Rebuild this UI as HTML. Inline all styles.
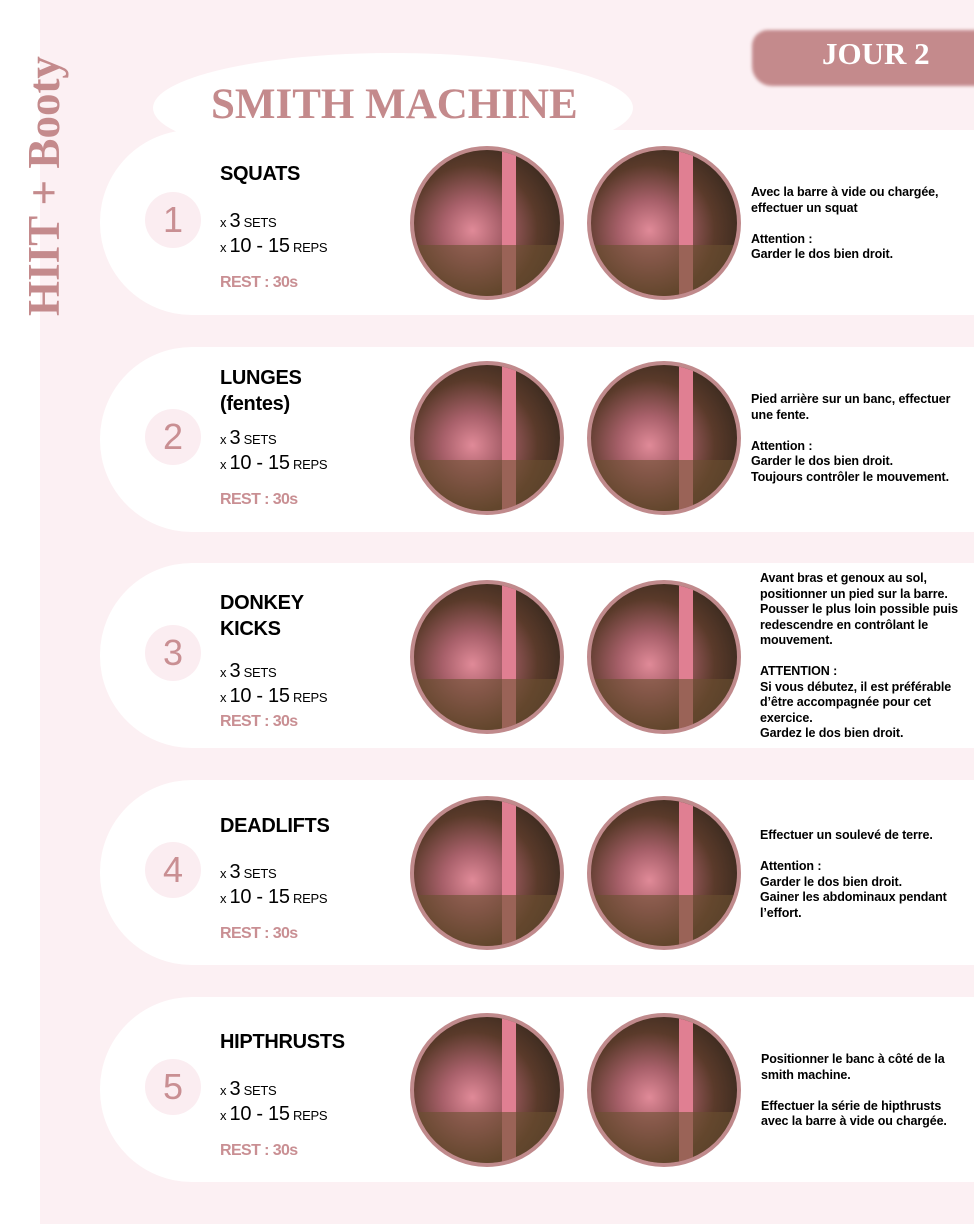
<!DOCTYPE html>
<html><head><meta charset="utf-8"><style>
*{margin:0;padding:0;box-sizing:border-box}
body{width:974px;height:1224px;position:relative;overflow:hidden;background:#fff;font-family:"Liberation Sans",sans-serif}
.bg{position:absolute;left:40px;top:0;width:934px;height:1224px;background:#fcf0f3}
.vt{position:absolute;left:44px;top:186px;transform:translate(-50%,-50%) rotate(-90deg);font-family:"Liberation Serif",serif;font-weight:bold;font-size:45px;color:#c48a8c;white-space:nowrap}
.ell{position:absolute;left:153px;top:53px;width:480px;height:110px;border-radius:50%;background:#fff}
.title{position:absolute;left:211px;top:80px;width:365px;text-align:center;font-family:"Liberation Serif",serif;font-weight:bold;font-size:43px;color:#c48a8c;white-space:nowrap}
.jour{position:absolute;left:752px;top:30px;width:240px;height:56px;background:#c48a8c;border-radius:16px 0 0 20px;filter:blur(1.5px)}
.jt{position:absolute;left:822px;top:36px;font-family:"Liberation Serif",serif;font-weight:bold;font-size:31px;color:#fff}
.card{position:absolute;left:100px;width:874px;height:185px;background:#fff;border-radius:92px 0 0 92px}
.num{position:absolute;left:45px;top:62px;width:56px;height:56px;border-radius:50%;background:#fbedf1;color:#c98f93;font-size:36px;text-align:center;line-height:56px}
.ex{position:absolute;left:120px;font-weight:bold;font-size:20px;color:#000;line-height:26px;letter-spacing:-0.3px}
.s{position:absolute;left:120px;font-size:13px;color:#000;letter-spacing:-0.3px}
.s b{font-weight:normal;font-size:20px}
.r{position:absolute;left:120px;font-size:16px;font-weight:bold;color:#c98f93;letter-spacing:-0.6px}
.ph{position:absolute;width:154px;height:154px;border-radius:50%;border:4px solid #c08a8c;background:radial-gradient(circle at 40% 55%,#e08a98 0,#a8606a 25%,#5a3a2a 55%,#3a2a1f 80%);overflow:hidden}
.ph::before{content:"";position:absolute;left:60%;top:0;width:14px;height:100%;background:#e07f92}
.ph::after{content:"";position:absolute;left:0;bottom:0;width:100%;height:35%;background:#6a5030;opacity:.6}
.d{position:absolute;font-size:12.5px;font-weight:bold;line-height:15.5px;letter-spacing:-0.1px;color:#000}
</style></head><body>
<div class="bg"></div>
<div class="vt">HIIT + Booty</div>
<div class="jour"></div><div class="jt">JOUR 2</div>
<div class="ell"></div><div class="title">SMITH MACHINE</div>

<div class="card" style="top:130px">
<div class="num">1</div>
<div class="ex" style="top:31px">SQUATS</div>
<div class="s" style="top:80px">x <b>3</b> SETS</div>
<div class="s" style="top:105px">x <b>10 - 15</b> REPS</div>
<div class="r" style="top:144px">REST : 30s</div>
<div class="ph" style="left:310px;top:16px"></div>
<div class="ph" style="left:487px;top:16px"></div>
<div class="d" style="left:651px;top:55px">Avec la barre à vide ou chargée,<br>effectuer un squat<br><br>Attention :<br>Garder le dos bien droit.</div>
</div>

<div class="card" style="top:347px">
<div class="num">2</div>
<div class="ex" style="top:18px">LUNGES<br>(fentes)</div>
<div class="s" style="top:80px">x <b>3</b> SETS</div>
<div class="s" style="top:105px">x <b>10 - 15</b> REPS</div>
<div class="r" style="top:144px">REST : 30s</div>
<div class="ph" style="left:310px;top:14px"></div>
<div class="ph" style="left:487px;top:14px"></div>
<div class="d" style="left:651px;top:45px">Pied arrière sur un banc, effectuer<br>une fente.<br><br>Attention :<br>Garder le dos bien droit.<br>Toujours contrôler le mouvement.</div>
</div>

<div class="card" style="top:563px">
<div class="num">3</div>
<div class="ex" style="top:27px">DONKEY<br>KICKS</div>
<div class="s" style="top:97px">x <b>3</b> SETS</div>
<div class="s" style="top:122px">x <b>10 - 15</b> REPS</div>
<div class="r" style="top:150px">REST : 30s</div>
<div class="ph" style="left:310px;top:17px"></div>
<div class="ph" style="left:487px;top:17px"></div>
<div class="d" style="left:660px;top:8px">Avant bras et genoux au sol,<br>positionner un pied sur la barre.<br>Pousser le plus loin possible puis<br>redescendre en contrôlant le<br>mouvement.<br><br>ATTENTION :<br>Si vous débutez, il est préférable<br>d’être accompagnée pour cet<br>exercice.<br>Gardez le dos bien droit.</div>
</div>

<div class="card" style="top:780px">
<div class="num">4</div>
<div class="ex" style="top:33px">DEADLIFTS</div>
<div class="s" style="top:81px">x <b>3</b> SETS</div>
<div class="s" style="top:106px">x <b>10 - 15</b> REPS</div>
<div class="r" style="top:145px">REST : 30s</div>
<div class="ph" style="left:310px;top:16px"></div>
<div class="ph" style="left:487px;top:16px"></div>
<div class="d" style="left:660px;top:48px">Effectuer un soulevé de terre.<br><br>Attention :<br>Garder le dos bien droit.<br>Gainer les abdominaux pendant<br>l’effort.</div>
</div>

<div class="card" style="top:997px">
<div class="num">5</div>
<div class="ex" style="top:32px">HIPTHRUSTS</div>
<div class="s" style="top:81px">x <b>3</b> SETS</div>
<div class="s" style="top:106px">x <b>10 - 15</b> REPS</div>
<div class="r" style="top:145px">REST : 30s</div>
<div class="ph" style="left:310px;top:16px"></div>
<div class="ph" style="left:487px;top:16px"></div>
<div class="d" style="left:661px;top:55px">Positionner le banc à côté de la<br>smith machine.<br><br>Effectuer la série de hipthrusts<br>avec la barre à vide ou chargée.</div>
</div>
</body></html>
